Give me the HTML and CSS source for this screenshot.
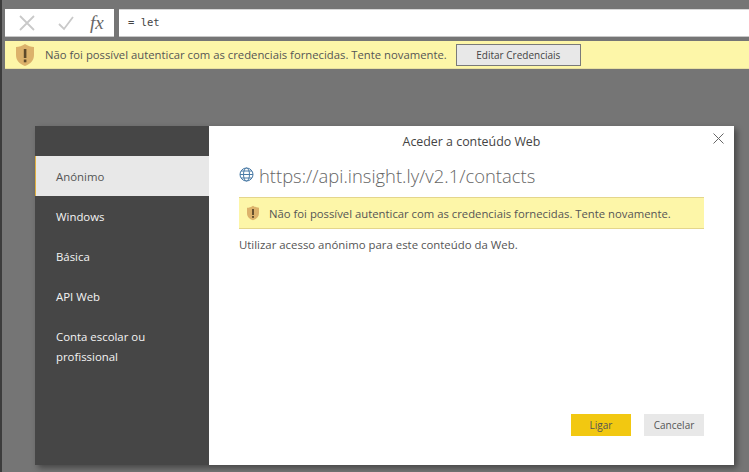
FILE: index.html
```html
<!DOCTYPE html>
<html lang="pt">
<head>
    <meta charset="UTF-8">
    <title>Aceder a conteúdo Web</title>
    <link rel="stylesheet" href="styles.css">
</head>
<body>
    <div class="formula-row">
        <div class="formula-buttons">
            <svg class="icon-cancel" width="18" height="18" viewBox="0 0 18 18"><path d="M2 2 L16 16 M16 2 L2 16" /></svg>
            <svg class="icon-check" width="18" height="18" viewBox="0 0 18 18"><path d="M2 10 L7 15 L16 3" /></svg>
            <span class="fx">fx</span>
        </div>
        <div class="formula-input">= let</div>
    </div>

    <div class="warning-bar">
        <svg class="shield" width="20" height="24" viewBox="0 0 20 24">
            <path d="M10 1 C7 3 4 4 1 4 L1 12 C1 18 5 21 10 23 C15 21 19 18 19 12 L19 4 C16 4 13 3 10 1 Z" fill="#dcb26b" />
            <rect x="8.8" y="6" width="2.6" height="9" fill="#5e4a2a" />
            <rect x="8.8" y="16.5" width="2.6" height="2.8" fill="#5e4a2a" />
        </svg>
        <span class="warning-text">Não foi possível autenticar com as credenciais fornecidas. Tente novamente.</span>
        <button class="edit-btn">Editar Credenciais</button>
    </div>

    <div class="dialog">
        <div class="sidebar">
            <div class="side-item active">Anónimo</div>
            <div class="side-item">Windows</div>
            <div class="side-item">Básica</div>
            <div class="side-item">API Web</div>
            <div class="side-item">Conta escolar ou profissional</div>
        </div>
        <div class="main">
            <div class="title">Aceder a conteúdo Web</div>
            <svg class="close" width="11" height="11" viewBox="0 0 11 11"><path d="M0.5 0.5 L10.5 10.5 M10.5 0.5 L0.5 10.5" /></svg>
            <div class="url-row">
                <svg class="globe" width="15" height="15" viewBox="0 0 15 15">
                    <circle cx="7.5" cy="7.5" r="6.5" />
                    <ellipse cx="7.5" cy="7.5" rx="3" ry="6.5" />
                    <path d="M1 7.5 H14 M2 4 H13 M2 11 H13" />
                </svg>
                <span class="url">https://api.insight.ly/v2.1/contacts</span>
            </div>
            <div class="dialog-warning">
                <svg width="14" height="16" viewBox="0 0 20 24">
                    <path d="M10 1 C7 3 4 4 1 4 L1 12 C1 18 5 21 10 23 C15 21 19 18 19 12 L19 4 C16 4 13 3 10 1 Z" fill="#dcb26b" />
                    <rect x="8.6" y="6" width="2.8" height="9" fill="#5e4a2a" />
                    <rect x="8.6" y="16.5" width="2.8" height="2.8" fill="#5e4a2a" />
                </svg>
                <span>Não foi possível autenticar com as credenciais fornecidas. Tente novamente.</span>
            </div>
            <div class="info">Utilizar acesso anónimo para este conteúdo da Web.</div>
            <div class="actions">
                <button class="btn-primary">Ligar</button>
                <button class="btn-cancel">Cancelar</button>
            </div>
        </div>
    </div>
</body>
</html>
```

FILE: styles.css
```css
html, body {
    height: 100%;
}

body {
    margin: 0;
    padding: 9px 0 0 3px;
    box-sizing: border-box;
    height: 472px;
    overflow: hidden;
    background-color: #757575;
    border-left: 2px solid #3c3c3c;
    font-family: "Open Sans", "Noto Sans", sans-serif;
    font-size: 11.3px;
    color: #444;
}

.formula-row {
    display: flex;
    gap: 5px;
    height: 28px;
}

.formula-buttons {
    width: 109px;
    background-color: white;
    border-bottom: 1px solid #c8c8c8;
    box-sizing: border-box;
    display: flex;
    align-items: center;
    padding-left: 13px;
}

.icon-cancel path {
    fill: none;
    stroke: #c9c9c9;
    stroke-width: 1.8;
}

.icon-check {
    margin-left: 21px;
}

.icon-check path {
    fill: none;
    stroke: #c9c9c9;
    stroke-width: 1.8;
}

.fx {
    margin-left: 15px;
    font-family: "Liberation Serif", serif;
    font-style: italic;
    font-size: 19px;
    color: #666;
}

.formula-input {
    flex: 1;
    background-color: white;
    border-top: 1px solid #d8d8d8;
    border-bottom: 1px solid #c8c8c8;
    box-sizing: border-box;
    padding: 0 0 0 9px;
    line-height: 25px;
    font-family: "DejaVu Sans Mono", monospace;
    font-size: 10.5px;
    color: #444;
}

.warning-bar {
    margin-top: 4px;
    height: 28px;
    background-color: #fdf6a8;
    border-bottom: 1px solid #e8e0a0;
    box-sizing: border-box;
    display: flex;
    align-items: center;
    padding-left: 10px;
    font-size: 11.3px;
    color: #555;
}

.warning-text {
    margin-left: 10px;
}

.edit-btn {
    margin-left: 9px;
    width: 125px;
    height: 22px;
    background-color: #e8e8e8;
    border: 1px solid #7a7a7a;
    font-family: "Open Sans", "Noto Sans", sans-serif;
    font-size: 10px;
    color: #444;
    padding: 0;
}

.dialog {
    position: absolute;
    left: 35px;
    top: 126px;
    width: 699px;
    height: 339px;
    display: flex;
    background-color: white;
    box-shadow: 3px 3px 6px rgba(0, 0, 0, 0.4);
}

.sidebar {
    width: 174px;
    padding-top: 30px;
    background-color: #464646;
    color: #f4f4f4;
}

.side-item {
    padding: 11px 21px 9px;
    line-height: 20px;
    font-size: 11.4px;
}

.side-item.active {
    background-color: #e8e8e8;
    color: #555;
    border-left: 1px solid #e0b040;
    padding-left: 20px;
}

.main {
    flex: 1;
    position: relative;
    padding: 0 30px;
    display: flex;
    flex-direction: column;
}

.title {
    text-align: center;
    font-size: 12.4px;
    line-height: 32px;
    color: #444;
}

.close {
    position: absolute;
    right: 10px;
    top: 7px;
}

.close path {
    stroke: #666;
    fill: none;
}

.url-row {
    display: flex;
    align-items: center;
    gap: 5px;
    margin-top: 1px;
    height: 34px;
}

.globe {
    margin-bottom: 3px;
}

.globe circle, .globe ellipse, .globe path {
    fill: none;
    stroke: #4a7ba6;
    stroke-width: 1;
}

.url {
    margin-bottom: 2px;
    font-size: 18.4px;
    color: #666;
    font-weight: 300;
}

.dialog-warning {
    margin-top: 4px;
    height: 32px;
    background-color: #fdf6a8;
    border-top: 1px solid #e4d68c;
    border-bottom: 1px solid #e4d68c;
    box-sizing: border-box;
    display: flex;
    align-items: center;
    gap: 9px;
    padding-left: 7px;
    font-size: 11.3px;
    color: #555;
}

.info {
    margin-top: 8px;
    font-size: 11.4px;
    color: #555;
}

.actions {
    margin-top: auto;
    margin-bottom: 29px;
    display: flex;
    justify-content: flex-end;
    gap: 13px;
}

.actions button {
    width: 60px;
    height: 22px;
    border: none;
    padding: 0;
    font-family: "Open Sans", "Noto Sans", sans-serif;
    font-size: 10px;
    color: #555;
}

.btn-primary {
    background-color: #f2c811;
}

.btn-cancel {
    background-color: #e8e8e8;
}
```
